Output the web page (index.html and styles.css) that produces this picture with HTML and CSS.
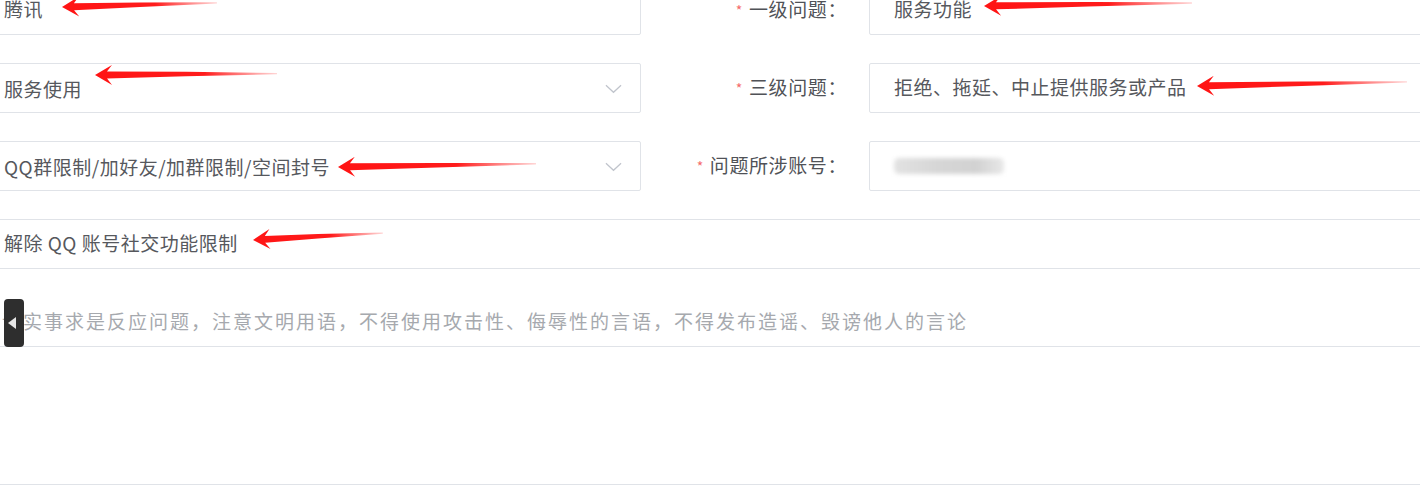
FILE: index.html
```html
<!DOCTYPE html>
<html lang="zh-CN">
<head>
<meta charset="utf-8">
<link rel="stylesheet" href="styles.css">
</head>
<body>
<div class="page">
  <div class="grid">
    <div class="field first">腾讯</div>
    <div class="label first"><span class="req">*</span>一级问题：</div>
    <div class="field first">服务功能</div>

    <div class="field select">服务使用<svg class="chev" viewBox="0 0 18 10"><path d="M1 1 L9 8.5 L17 1" fill="none" stroke="#c0c4cc" stroke-width="1.3"/></svg></div>
    <div class="label"><span class="req">*</span>三级问题：</div>
    <div class="field">拒绝、拖延、中止提供服务或产品</div>

    <div class="field select">QQ群限制/加好友/加群限制/空间封号<svg class="chev" viewBox="0 0 18 10"><path d="M1 1 L9 8.5 L17 1" fill="none" stroke="#c0c4cc" stroke-width="1.3"/></svg></div>
    <div class="label"><span class="req">*</span>问题所涉账号：</div>
    <div class="field"><span class="masked"></span></div>

    <div class="field wide">解除 QQ 账号社交功能限制</div>
    <div class="field wide title placeholder">请实事求是反应问题，注意文明用语，不得使用攻击性、侮辱性的言语，不得发布造谣、毁谤他人的言论</div>
    <div class="field wide area"></div>
  </div>
</div>

<div class="handle"><span class="tri"></span></div>

<svg class="arrows" width="1420" height="501" viewBox="0 0 1420 501">
  <defs>
    <linearGradient id="fade" x1="0" y1="0" x2="1" y2="0">
      <stop offset="0" stop-color="#ff1414"/>
      <stop offset="0.6" stop-color="#ff1c1c"/>
      <stop offset="1" stop-color="#ff3030" stop-opacity="0.2"/>
    </linearGradient>
  </defs>
  <g fill="url(#fade)">
    <polygon transform="translate(62,7) rotate(-1.5)" points="0,0 17,-10 12,-3.5 78,-2.5 155,-0.8 155,0.6 78,2 12,3.5 17,10"/>
    <polygon transform="translate(984,6) rotate(-0.8)" points="0,0 17,-10 12,-3.5 104,-2.5 208,-0.8 208,0.6 104,2 12,3.5 17,10"/>
    <polygon transform="translate(95,75) rotate(-0.4)" points="0,0 17,-10 12,-3.5 91,-2.5 182,-0.8 182,0.6 91,2 12,3.5 17,10"/>
    <polygon transform="translate(1197,86) rotate(-1.1)" points="0,0 17,-10 12,-3.5 105,-2.5 210,-0.8 210,0.6 105,2 12,3.5 17,10"/>
    <polygon transform="translate(338,167) rotate(-0.9)" points="0,0 17,-10 12,-3.5 99,-2.5 198,-0.8 198,0.6 99,2 12,3.5 17,10"/>
    <polygon transform="translate(253,240) rotate(-3)" points="0,0 17,-10 12,-3.5 65,-2.5 130,-0.8 130,0.6 65,2 12,3.5 17,10"/>
  </g>
</svg>
</body>
</html>
```

FILE: styles.css
```css
html, body {
  margin: 0;
  padding: 0;
  background: #ffffff;
  overflow: hidden;
}
body {
  position: relative;
  width: 1420px;
  height: 501px;
  font-family: "Noto Sans CJK SC", "Noto Sans", sans-serif;
}
.page {
  margin-left: -21px;
  margin-top: -15px;
  width: 1446px;
}
.grid {
  display: grid;
  grid-template-columns: 662px 228px 1fr;
  row-gap: 28px;
}
.field {
  box-sizing: border-box;
  height: 50px;
  border: 1px solid #e0e3e8;
  border-radius: 2px;
  padding-left: 24px;
  padding-bottom: 3px;
  display: flex;
  align-items: center;
  font-size: 19px;
  letter-spacing: 0.5px;
  color: #56585d;
  position: relative;
}
.select {
  justify-content: space-between;
  padding-right: 18px;
  padding-bottom: 0;
}
.select .chev {
  margin-top: 2px;
}
.chev {
  width: 17px;
  height: 10px;
}
.label {
  display: flex;
  align-items: center;
  justify-content: flex-end;
  padding-right: 22px;
  padding-bottom: 3px;
  font-size: 19px;
  letter-spacing: 0.6px;
  color: #505257;
}
.req {
  color: #f56c6c;
  font-size: 14px;
  margin-right: 6px;
  transform: translateY(1px);
}
.wide {
  grid-column: 1 / 4;
}
.title {
  border-top: none;
}
.placeholder {
  color: #a6a9ae;
  letter-spacing: 2px;
  padding-left: 22px;
}
.area {
  height: 138px;
  margin-top: -28px;
  border-top: none;
}
.masked {
  display: inline-block;
  width: 110px;
  height: 16px;
  margin-top: 3px;
  background: linear-gradient(90deg, #e2e2e2 0%, #d6d6d6 40%, #d2d2d2 75%, #e8e8e8 100%);
  filter: blur(2px);
  border-radius: 5px;
}
.handle {
  position: absolute;
  left: 4px;
  top: 299px;
  width: 20px;
  height: 48px;
  background: #2e2e2e;
  border-radius: 4px;
  display: flex;
  align-items: center;
  justify-content: center;
}
.tri {
  width: 0;
  height: 0;
  border-top: 6px solid transparent;
  border-bottom: 6px solid transparent;
  border-right: 8px solid #e6e6e6;
  margin-left: -4px;
}
.arrows {
  position: absolute;
  left: 0;
  top: 0;
  pointer-events: none;
}
```
